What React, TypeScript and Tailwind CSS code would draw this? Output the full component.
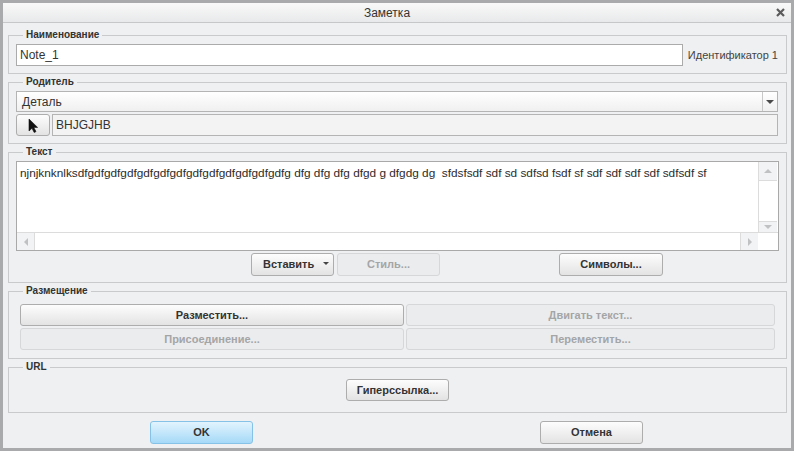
import React from "react";

function Group({ label, className, children }: { label: string; className: string; children: React.ReactNode }) {
  return (
    <div className={"relative border border-[#c9cacc] " + className}>
      <span className="absolute left-[14px] top-[-7px] px-[3px] bg-[#eef0f1] text-[10px] font-bold leading-[12px] text-[#333]">
        {label}
      </span>
      {children}
    </div>
  );
}

function Btn({ children, className, disabled }: { children: React.ReactNode; className: string; disabled?: boolean }) {
  return (
    <div
      className={
        "flex items-center justify-center rounded-[3px] border text-[11px] font-bold " +
        (disabled
          ? "border-[#d6d7d9] bg-[#ebecee] text-[#a4a5a7] "
          : "border-[#adadad] bg-linear-to-b from-[#fdfdfd] to-[#e3e3e3] text-[#333] ") +
        className
      }
    >
      {children}
    </div>
  );
}

function Tri({ dir, color, s = 8 }: { dir: "up" | "down" | "left" | "right"; color: string; s?: number }) {
  const h2 = s / 2;
  const pts =
    dir === "down"
      ? `0,0 ${s},0 ${h2},${h2}`
      : dir === "up"
      ? `0,${h2} ${s},${h2} ${h2},0`
      : dir === "left"
      ? `${h2},0 ${h2},${s} 0,${h2}`
      : `0,0 0,${s} ${h2},${h2}`;
  const w = dir === "up" || dir === "down" ? s : h2;
  const h = dir === "up" || dir === "down" ? h2 : s;
  return (
    <svg width={w} height={h} viewBox={`0 0 ${w} ${h}`}>
      <polygon points={pts} fill={color} />
    </svg>
  );
}

export default function App() {
  const text =
    "njnjknknlksdfgdfgdfgdfgdfgdfgdfgdfgdfgdfgdfgdfgdfg dfg dfg dfg dfgd g dfgdg dg  sfdsfsdf sdf sd sdfsd fsdf sf sdf sdf sdf sdf sdfsdf sf";
  return (
    <div className="w-[794px] h-[451px] overflow-hidden border-[3px] border-[#a9aaac] bg-[#eef0f1] flex flex-col font-['Liberation_Sans',Arial,sans-serif] text-[#333]">
      {/* Title bar */}
      <div className="h-[20px] shrink-0 flex items-center border-b border-[#c6c7c9] bg-linear-to-b from-[#f9f9f9] to-[#e8e9ea]">
        <div className="flex-1 text-center text-[12px] leading-[14px] text-[#333]">Заметка</div>
        <div className="w-[20px] flex items-center justify-center pr-[2px]">
          <svg width="9" height="9" viewBox="0 0 9 9">
            <path d="M1 1 L8 8 M8 1 L1 8" stroke="#5b5b5b" strokeWidth="2.2" />
          </svg>
        </div>
      </div>

      {/* Body */}
      <div className="flex-1 flex flex-col pl-[5px] pr-[4px]">
        <Group label="Наименование" className="mt-[12px] flex items-center pt-[8px] pb-[7px] pl-[7px] pr-[8px] gap-[5px]">
          <div className="h-[22px] flex-1 flex items-center border border-[#ababab] bg-white pl-[3px] text-[12px] text-[#333]">
            Note_1
          </div>
          <div className="text-[11px] text-[#444]">Идентификатор 1</div>
        </Group>

        <Group label="Родитель" className="mt-[8px] flex flex-col gap-[2px] pt-[8px] pb-[7px] pl-[7px] pr-[8px]">
          <div className="h-[21px] flex border border-[#b4b4b4] bg-linear-to-b from-white to-[#f0f0f0]">
            <div className="flex-1 flex items-center pl-[5px] text-[12px] text-[#333]">Деталь</div>
            <div className="w-[15px] flex items-center justify-center border-l border-[#c8c8c8]">
              <Tri dir="down" color="#4a4a4a" />
            </div>
          </div>
          <div className="h-[22px] flex gap-[2px]">
            <div className="w-[34px] flex items-center justify-center rounded-[3px] border border-[#adadad] bg-linear-to-b from-[#fdfdfd] to-[#e3e3e3]">
              <svg width="11" height="15" viewBox="0 0 11 15">
                <path d="M1 1 L1 13 L4 10.3 L6.2 14.5 L8 13.6 L5.8 9.4 L9.6 9.4 Z" fill="#111" stroke="#111" strokeWidth="0.6" strokeLinejoin="round" />
              </svg>
            </div>
            <div className="flex-1 flex items-center border border-[#b4b4b4] bg-[#f3f3f3] pl-[3px] text-[12px] text-[#333]">
              BHJGJHB
            </div>
          </div>
        </Group>

        <Group label="Текст" className="mt-[8px] flex flex-col pt-[8px] pb-[6px] pl-[7px] pr-[7px]">
          <div className="h-[90px] flex flex-col border border-[#a9a9a9] bg-white">
            <div className="flex-1 flex min-h-0">
              <div className="flex-1 pl-[3px] pt-[4px] text-[11.8px] leading-[14px] whitespace-pre text-[#2b2b2b] overflow-hidden">
                {text}
              </div>
              <div className="w-[19px] mr-[1px] flex flex-col border-l border-[#dcdcdc]">
                <div className="h-[19px] flex items-center justify-center bg-[#f2f3f4] border-b border-[#dcdcdc]">
                  <Tri dir="up" color="#c0c1c3" />
                </div>
                <div className="flex-1" />
                <div className="h-[11px] flex items-center justify-center bg-[#f2f3f4] border-t border-[#dcdcdc]">
                  <Tri dir="down" color="#c0c1c3" />
                </div>
              </div>
            </div>
            <div className="h-[18px] flex border-t border-[#dcdcdc]">
              <div className="w-[18px] flex items-center justify-center bg-[#f2f3f4] border-r border-[#dcdcdc]">
                <Tri dir="left" color="#c0c1c3" />
              </div>
              <div className="flex-1" />
              <div className="w-[18px] flex items-center justify-center bg-[#f2f3f4] border-l border-[#dcdcdc]">
                <Tri dir="right" color="#c0c1c3" />
              </div>
              <div className="w-[20px]" />
            </div>
          </div>
          <div className="mt-[2px] h-[23px] flex">
            <div className="ml-[235px] w-[83px] relative flex items-center rounded-[3px] border border-[#adadad] bg-linear-to-b from-[#fdfdfd] to-[#e3e3e3] text-[11px] font-bold text-[#333]">
              <span className="pl-[11px]">Вставить</span>
              <span className="absolute right-[4px] top-[8px] flex">
                <Tri dir="down" color="#444" s={6} />
              </span>
            </div>
            <Btn disabled className="ml-[3px] w-[103px]">
              Стиль...
            </Btn>
            <Btn className="ml-[119px] w-[104px]">Символы...</Btn>
          </div>
        </Group>

        <Group label="Размещение" className="mt-[8px] pt-[12px] pb-[8px] px-[11px] grid grid-cols-[384px_1fr] gap-[2px]">
          <Btn className="h-[22px]">Разместить...</Btn>
          <Btn disabled className="h-[22px]">
            Двигать текст...
          </Btn>
          <Btn disabled className="h-[22px]">
            Присоединение...
          </Btn>
          <Btn disabled className="h-[22px]">
            Переместить...
          </Btn>
        </Group>

        <Group label="URL" className="mt-[8px] py-[11px] flex justify-center">
          <Btn className="w-[103px] h-[22px]">Гиперссылка...</Btn>
        </Group>

        <div className="mt-[8px] h-[23px] flex">
          <div className="ml-[142px] w-[103px] flex items-center justify-center rounded-[3px] border border-[#86c2e8] bg-linear-to-b from-[#e2f4fe] to-[#a5d9f7] text-[11px] font-bold text-[#333]">
            OK
          </div>
          <Btn className="ml-[287px] w-[103px]">Отмена</Btn>
        </div>
      </div>
    </div>
  );
}
